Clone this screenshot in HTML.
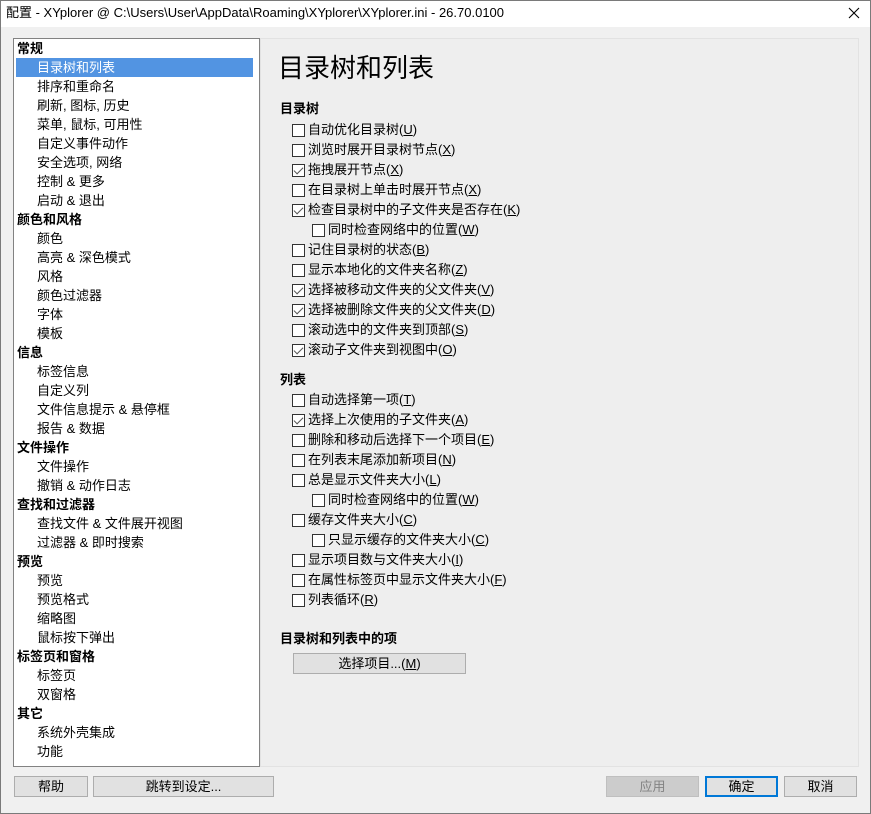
<!DOCTYPE html>
<html><head><meta charset="utf-8"><style>
*{margin:0;padding:0;box-sizing:border-box}
body{width:871px;height:814px;background:#f0f0f0;font-family:"Liberation Sans","Microsoft YaHei","Noto Sans CJK SC",sans-serif;font-size:13px;color:#000;position:relative;overflow:hidden}
.frame{position:absolute;left:0;top:0;width:871px;height:814px;border:1px solid #7a7a7a;pointer-events:none;z-index:9}
.title{position:absolute;left:0;top:0;width:871px;height:27px;background:#fff;font-size:13px;line-height:26px;padding-left:6px}
.x{position:absolute;right:11px;top:7px}
.list{position:absolute;left:13px;top:38px;width:247px;height:729px;background:#fff;border:1px solid #828282}
.it{position:absolute;left:0;height:19px;line-height:19px;width:237px;white-space:nowrap}
.h{padding-left:3px;font-weight:bold}
.s{padding-left:23px}
.sel{background:#5294e2;color:#fff;left:2px;padding-left:21px}
.panel{position:absolute;left:260px;top:38px;width:599px;height:729px;background:#eeeeee;border:1px solid #e2e2e2}
.t1{position:absolute;left:278px;top:51px;font-size:26px;line-height:34px}
.sec{position:absolute;left:280px;font-weight:bold;line-height:18px}
.cb{position:absolute;height:20px;line-height:20px;white-space:nowrap}
.cb i{position:absolute;left:0;top:4px;width:13px;height:13px;border:1px solid #333;background:#fff}
.cb i.c::after{content:"";position:absolute;left:3px;top:0px;width:4px;height:8px;border:solid #555;border-width:0 1.3px 1.3px 0;transform:rotate(45deg)}
.cb span{position:absolute;left:16px}
u{text-decoration:underline}
.btn{position:absolute;height:21px;border:1px solid #adadad;background:#e1e1e1;text-align:center;line-height:19px}
</style></head><body>
<div class="frame"></div>
<div class="title">配置 - XYplorer @ C:\Users\User\AppData\Roaming\XYplorer\XYplorer.ini - 26.70.0100
<svg class="x" width="12" height="12" viewBox="0 0 12 12"><path d="M1 1L11 11M11 1L1 11" stroke="#000" stroke-width="1.1"/></svg></div>
<div class="list">
<div class="it h" style="top:0">常规</div>
<div class="it sel" style="top:19px">目录树和列表</div>
<div class="it s" style="top:38px">排序和重命名</div>
<div class="it s" style="top:57px">刷新, 图标, 历史</div>
<div class="it s" style="top:76px">菜单, 鼠标, 可用性</div>
<div class="it s" style="top:95px">自定义事件动作</div>
<div class="it s" style="top:114px">安全选项, 网络</div>
<div class="it s" style="top:133px">控制 &amp; 更多</div>
<div class="it s" style="top:152px">启动 &amp; 退出</div>
<div class="it h" style="top:171px">颜色和风格</div>
<div class="it s" style="top:190px">颜色</div>
<div class="it s" style="top:209px">高亮 &amp; 深色模式</div>
<div class="it s" style="top:228px">风格</div>
<div class="it s" style="top:247px">颜色过滤器</div>
<div class="it s" style="top:266px">字体</div>
<div class="it s" style="top:285px">模板</div>
<div class="it h" style="top:304px">信息</div>
<div class="it s" style="top:323px">标签信息</div>
<div class="it s" style="top:342px">自定义列</div>
<div class="it s" style="top:361px">文件信息提示 &amp; 悬停框</div>
<div class="it s" style="top:380px">报告 &amp; 数据</div>
<div class="it h" style="top:399px">文件操作</div>
<div class="it s" style="top:418px">文件操作</div>
<div class="it s" style="top:437px">撤销 &amp; 动作日志</div>
<div class="it h" style="top:456px">查找和过滤器</div>
<div class="it s" style="top:475px">查找文件 &amp; 文件展开视图</div>
<div class="it s" style="top:494px">过滤器 &amp; 即时搜索</div>
<div class="it h" style="top:513px">预览</div>
<div class="it s" style="top:532px">预览</div>
<div class="it s" style="top:551px">预览格式</div>
<div class="it s" style="top:570px">缩略图</div>
<div class="it s" style="top:589px">鼠标按下弹出</div>
<div class="it h" style="top:608px">标签页和窗格</div>
<div class="it s" style="top:627px">标签页</div>
<div class="it s" style="top:646px">双窗格</div>
<div class="it h" style="top:665px">其它</div>
<div class="it s" style="top:684px">系统外壳集成</div>
<div class="it s" style="top:703px">功能</div>
</div>
<div class="panel"></div>
<div class="t1">目录树和列表</div>
<div class="sec" style="top:100px">目录树</div>
<div class="cb" style="left:292px;top:120px"><i></i><span>自动优化目录树(<u>U</u>)</span></div>
<div class="cb" style="left:292px;top:140px"><i></i><span>浏览时展开目录树节点(<u>X</u>)</span></div>
<div class="cb" style="left:292px;top:160px"><i class="c"></i><span>拖拽展开节点(<u>X</u>)</span></div>
<div class="cb" style="left:292px;top:180px"><i></i><span>在目录树上单击时展开节点(<u>X</u>)</span></div>
<div class="cb" style="left:292px;top:200px"><i class="c"></i><span>检查目录树中的子文件夹是否存在(<u>K</u>)</span></div>
<div class="cb" style="left:312px;top:220px"><i></i><span>同时检查网络中的位置(<u>W</u>)</span></div>
<div class="cb" style="left:292px;top:240px"><i></i><span>记住目录树的状态(<u>B</u>)</span></div>
<div class="cb" style="left:292px;top:260px"><i></i><span>显示本地化的文件夹名称(<u>Z</u>)</span></div>
<div class="cb" style="left:292px;top:280px"><i class="c"></i><span>选择被移动文件夹的父文件夹(<u>V</u>)</span></div>
<div class="cb" style="left:292px;top:300px"><i class="c"></i><span>选择被删除文件夹的父文件夹(<u>D</u>)</span></div>
<div class="cb" style="left:292px;top:320px"><i></i><span>滚动选中的文件夹到顶部(<u>S</u>)</span></div>
<div class="cb" style="left:292px;top:340px"><i class="c"></i><span>滚动子文件夹到视图中(<u>O</u>)</span></div>
<div class="sec" style="top:371px">列表</div>
<div class="cb" style="left:292px;top:390px"><i></i><span>自动选择第一项(<u>T</u>)</span></div>
<div class="cb" style="left:292px;top:410px"><i class="c"></i><span>选择上次使用的子文件夹(<u>A</u>)</span></div>
<div class="cb" style="left:292px;top:430px"><i></i><span>删除和移动后选择下一个项目(<u>E</u>)</span></div>
<div class="cb" style="left:292px;top:450px"><i></i><span>在列表末尾添加新项目(<u>N</u>)</span></div>
<div class="cb" style="left:292px;top:470px"><i></i><span>总是显示文件夹大小(<u>L</u>)</span></div>
<div class="cb" style="left:312px;top:490px"><i></i><span>同时检查网络中的位置(<u>W</u>)</span></div>
<div class="cb" style="left:292px;top:510px"><i></i><span>缓存文件夹大小(<u>C</u>)</span></div>
<div class="cb" style="left:312px;top:530px"><i></i><span>只显示缓存的文件夹大小(<u>C</u>)</span></div>
<div class="cb" style="left:292px;top:550px"><i></i><span>显示项目数与文件夹大小(<u>I</u>)</span></div>
<div class="cb" style="left:292px;top:570px"><i></i><span>在属性标签页中显示文件夹大小(<u>F</u>)</span></div>
<div class="cb" style="left:292px;top:590px"><i></i><span>列表循环(<u>R</u>)</span></div>
<div class="sec" style="top:630px">目录树和列表中的项</div>
<div class="btn" style="left:293px;top:653px;width:173px">选择项目...(<u>M</u>)</div>
<div class="btn" style="left:14px;top:776px;width:74px">帮助</div>
<div class="btn" style="left:93px;top:776px;width:181px">跳转到设定...</div>
<div class="btn" style="left:606px;top:776px;width:93px;background:#cccccc;border-color:#bfbfbf;color:#838383">应用</div>
<div class="btn" style="left:705px;top:776px;width:73px;border:2px solid #0078d7;line-height:17px">确定</div>
<div class="btn" style="left:784px;top:776px;width:73px">取消</div>
</body></html>
